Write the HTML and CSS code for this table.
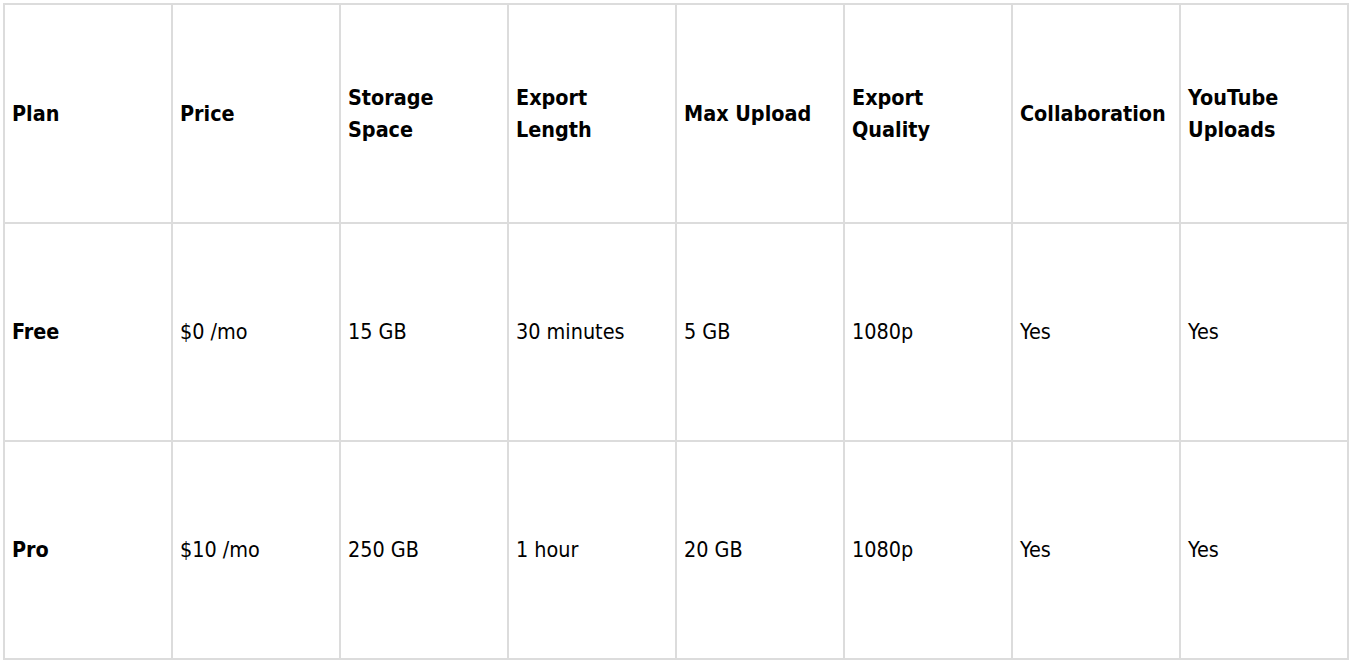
FILE: index.html
```html
<!DOCTYPE html>
<html>
<head>
<meta charset="utf-8">
<link rel="stylesheet" href="styles.css">
</head>
<body>
<table class="plans">
  <thead>
    <tr>
      <th>Plan</th>
      <th>Price</th>
      <th>Storage Space</th>
      <th>Export Length</th>
      <th>Max Upload</th>
      <th>Export Quality</th>
      <th>Collaboration</th>
      <th>YouTube Uploads</th>
    </tr>
  </thead>
  <tbody>
    <tr>
      <td class="name">Free</td>
      <td>$0 /mo</td>
      <td>15 GB</td>
      <td>30 minutes</td>
      <td>5 GB</td>
      <td>1080p</td>
      <td>Yes</td>
      <td>Yes</td>
    </tr>
    <tr>
      <td class="name">Pro</td>
      <td>$10 /mo</td>
      <td>250 GB</td>
      <td>1 hour</td>
      <td>20 GB</td>
      <td>1080p</td>
      <td>Yes</td>
      <td>Yes</td>
    </tr>
  </tbody>
</table>
</body>
</html>
```
FILE: styles.css
```css
html, body {
  background: #fff;
}
body {
  margin: 3px;
  font-family: "DejaVu Sans Condensed", "DejaVu Sans", sans-serif;
  font-stretch: semi-condensed;
  font-size: 21.4px;
  color: #000;
}
.plans {
  border-collapse: collapse;
  table-layout: fixed;
  width: 1346px;
}
.plans th,
.plans td {
  border: 2px solid #dcdcdc;
  height: 216px;
  padding: 0 7px;
  text-align: left;
  vertical-align: middle;
  line-height: 32px;
  font-weight: normal;
}
.plans th {
  font-weight: bold;
  height: 217px;
}
.plans td.name {
  font-weight: bold;
}
```
